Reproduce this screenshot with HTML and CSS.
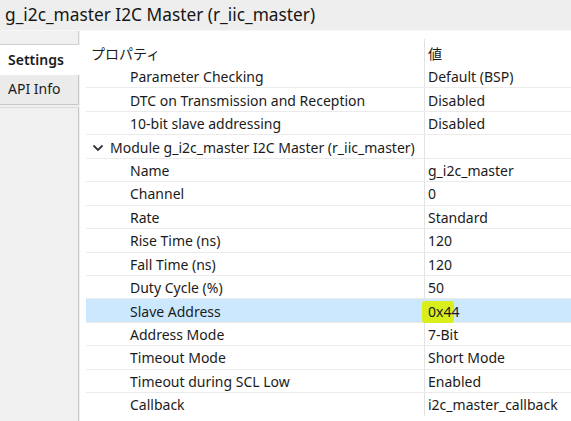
FILE: index.html
```html
<!DOCTYPE html>
<html>
<head>
<meta charset="utf-8">
<link rel="stylesheet" href="styles.css">
</head>
<body>
<div class="title">g_i2c_master I2C Master (r_iic_master)</div>
<div class="main">
  <div class="tabs">
    <div class="tab-spacer"></div>
    <div class="tab active">Settings</div>
    <div class="tab">API Info</div>
    <div class="tab-rest"></div>
  </div>
  <div class="content">
    <div class="table">
      <div class="row header"><div class="cell name top">プロパティ</div><div class="cell val">値</div></div>
      <div class="row"><div class="cell name child">Parameter Checking</div><div class="cell val">Default (BSP)</div></div>
      <div class="row line"><div class="cell name child">DTC on Transmission and Reception</div><div class="cell val">Disabled</div></div>
      <div class="row line"><div class="cell name child">10-bit slave addressing</div><div class="cell val">Disabled</div></div>
      <div class="row line"><div class="cell name group"><svg class="chev" width="12" height="8" viewBox="0 0 12 8"><polyline points="1.5,1.5 6,6 10.5,1.5" fill="none" stroke="#333" stroke-width="1.8"/></svg>Module g_i2c_master I2C Master (r_iic_master)</div><div class="cell val"></div></div>
      <div class="row line"><div class="cell name child">Name</div><div class="cell val">g_i2c_master</div></div>
      <div class="row line"><div class="cell name child">Channel</div><div class="cell val">0</div></div>
      <div class="row line"><div class="cell name child">Rate</div><div class="cell val">Standard</div></div>
      <div class="row line"><div class="cell name child">Rise Time (ns)</div><div class="cell val">120</div></div>
      <div class="row line"><div class="cell name child">Fall Time (ns)</div><div class="cell val">120</div></div>
      <div class="row line"><div class="cell name child">Duty Cycle (%)</div><div class="cell val">50</div></div>
      <div class="row line selected"><div class="cell name child">Slave Address</div><div class="cell val"><span class="hl-wrap"><span class="hl"></span><span class="hl-text">0x44</span></span></div></div>
      <div class="row line"><div class="cell name child">Address Mode</div><div class="cell val">7-Bit</div></div>
      <div class="row line"><div class="cell name child">Timeout Mode</div><div class="cell val">Short Mode</div></div>
      <div class="row line"><div class="cell name child">Timeout during SCL Low</div><div class="cell val">Enabled</div></div>
      <div class="row line"><div class="cell name child">Callback</div><div class="cell val">i2c_master_callback</div></div>
    </div>
  </div>
</div>
</body>
</html>
```

FILE: styles.css
```css
html, body {
  margin: 0;
  padding: 0;
  width: 571px;
  height: 421px;
  overflow: hidden;
  background: #ffffff;
  font-family: "Noto Sans", "Noto Sans CJK JP", sans-serif;
  color: #1b1b1b;
}
.title {
  height: 31px;
  box-sizing: border-box;
  background: #eeeeee;
  border-bottom: 1px solid #f8f8f8;
  font-size: 17.3px;
  line-height: 30px;
  padding-left: 5px;
  color: #161616;
}
.main {
  display: flex;
  height: 390px;
}
.tabs {
  width: 80px;
  display: flex;
  flex-direction: column;
  background: #f0f0f0;
  flex-shrink: 0;
}
.tab-spacer {
  height: 14px;
  box-sizing: border-box;
  border-right: 1px solid #d0d0d0;
  border-bottom: 1px solid #d0d0d0;
  margin-right: 1px;
  background: #f0f0f0;
}
.tab {
  height: 30px;
  box-sizing: border-box;
  font-size: 14px;
  line-height: 28px;
  padding-left: 8px;
  background: #ebebeb;
  border-right: 1px solid #c8c8c8;
  border-bottom: 1px solid #c8c8c8;
  margin-right: 1px;
}
.tab.active {
  background: #ffffff;
  font-weight: 600;
  border-right: none;
  border-bottom: none;
  margin-right: 0;
  line-height: 30px;
}
.tab-rest {
  flex: 1;
  border-right: 1px solid #c8c8c8;
  margin-right: 1px;
  border-top: 1px solid #dcdcdc;
  margin-top: 2px;
}
.content {
  flex: 1;
  padding-top: 8px;
  padding-left: 6px;
}
.table {
  display: flex;
  flex-direction: column;
}
.row {
  display: grid;
  grid-template-columns: 338px 1fr;
  height: 23.44px;
  box-sizing: border-box;
  font-size: 14px;
}
.row.header {
  height: 25px;
}
.row.line {
  border-top: 1px solid #ebebeb;
}
.row.selected {
  background: #cce8ff;
}
.cell {
  display: flex;
  align-items: center;
  white-space: nowrap;
  padding-top: 1px;
}
.name.top {
  padding-left: 5px;
  padding-top: 2px;
}
.name.child {
  padding-left: 44px;
}
.name.group {
  padding-left: 6px;
}
.chev {
  margin-right: 6px;
  margin-top: 1px;
}
.val {
  border-left: 1px solid #e3e3e3;
  padding-left: 3px;
}
.header .val {
  padding-top: 2px;
}
.hl-wrap {
  position: relative;
  display: inline-block;
}
.hl {
  position: absolute;
  left: -6px;
  top: -1px;
  width: 32px;
  height: 22px;
  background: #d9ef1c;
  border-radius: 3px;
}
.hl-text {
  position: relative;
}
```
